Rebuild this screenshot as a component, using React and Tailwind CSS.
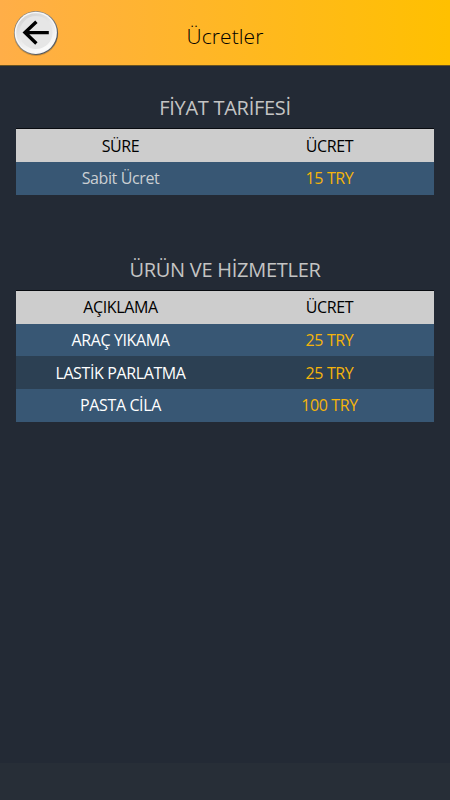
const tariffs = [{ name: "Sabit Ücret", price: "15 TRY", muted: true }]

const services = [
  { name: "ARAÇ YIKAMA", price: "25 TRY" },
  { name: "LASTİK PARLATMA", price: "25 TRY" },
  { name: "PASTA CİLA", price: "100 TRY" },
]

const BackButton = () => (
  <button aria-label="Geri" className="ml-[13px] mt-[10px] h-[46px] w-[46px]">
    <svg viewBox="0 0 46 46" className="h-full w-full">
      <defs>
        <linearGradient id="rim" x1="0" y1="0" x2="1" y2="1">
          <stop offset="0" stopColor="#77736d" />
          <stop offset="0.35" stopColor="#8f8f8f" />
          <stop offset="0.65" stopColor="#6a6f76" />
          <stop offset="0.8" stopColor="#4c535c" />
          <stop offset="1" stopColor="#989898" />
        </linearGradient>
        <linearGradient id="face" x1="0" y1="0" x2="0.5" y2="1">
          <stop offset="0" stopColor="#cdcdcd" />
          <stop offset="0.5" stopColor="#e6e6e6" />
          <stop offset="1" stopColor="#fafafa" />
        </linearGradient>
      </defs>
      <circle cx="23" cy="23.8" r="22.2" fill="#7a5a20" opacity="0.35" />
      <circle cx="23" cy="23" r="22" fill="url(#rim)" />
      <circle cx="22.8" cy="22.8" r="21.1" fill="#f7f7f7" />
      <circle cx="22.8" cy="22.8" r="19.6" fill="url(#face)" />
      <circle cx="23" cy="22.6" r="16.5" fill="#e6e6e6" />
      <path d="M35.8 22.6H11.6M23.4 11.8L12 22.6L23.4 33.4" fill="none" stroke="#000" strokeWidth="3.4" />
    </svg>
  </button>
)

const PriceTable = ({ title, label, rows }) => (
  <section>
    <h2 className="h-[43px] pt-[8px] text-center text-[20px] leading-[28px] font-normal tracking-[-0.27px] text-[#c4c4c4]">{title}</h2>
    <table className="w-full table-fixed border-collapse text-center text-[16px] leading-[24px] tracking-[-0.38px]">
      <thead>
        <tr className="h-[33px] bg-[#cdcdcd] text-black shadow-[0_-1px_0_#080b10]">
          <th className="p-0 font-normal">{label}</th>
          <th className="p-0 font-normal">ÜCRET</th>
        </tr>
      </thead>
      <tbody>
        {rows.map((row) => (
          <tr key={row.name} className="h-[32.7px] odd:bg-[#385774] even:bg-[#2c4053]">
            <td className={row.muted ? "p-0 text-[#cbcfd3]" : "p-0 text-white"}>{row.name}</td>
            <td className="p-0 text-[#f5b40a]">{row.price}</td>
          </tr>
        ))}
      </tbody>
    </table>
  </section>
)

export default function App() {
  return (
    <div className="flex h-[800px] w-[450px] flex-col bg-[#232a35] font-['Open_Sans','Noto_Sans',sans-serif]">
      <header className="grid h-[66px] shrink-0 grid-cols-[1fr_auto_1fr] border-b border-[#685322] bg-linear-to-r/srgb from-[#ffae48] to-[#ffc000]">
        <div>
          <BackButton />
        </div>
        <h1 className="pt-[22px] text-[21px] leading-[28px] font-light text-black tracking-[0.1px]">Ücretler</h1>
      </header>
      <main className="flex flex-1 flex-col gap-[53px] px-4 pt-5">
        <PriceTable title="FİYAT TARİFESİ" label="SÜRE" rows={tariffs} />
        <PriceTable title="ÜRÜN VE HİZMETLER" label="AÇIKLAMA" rows={services} />
      </main>
      <footer className="h-[37px] shrink-0 bg-[#272e37]" />
    </div>
  )
}
